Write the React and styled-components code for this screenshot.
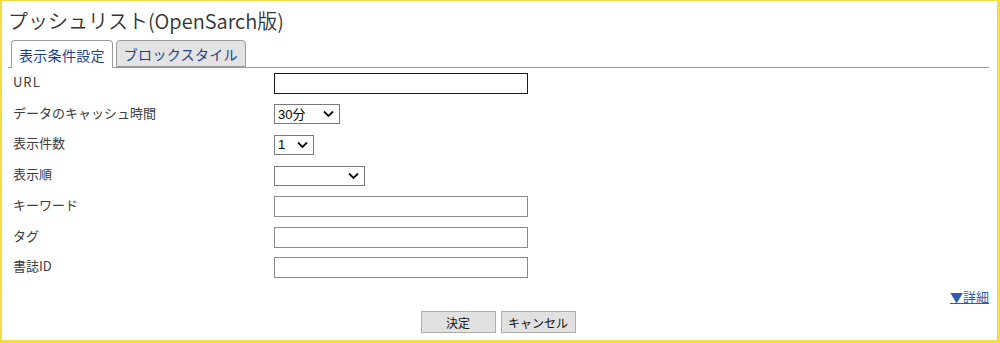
import React from 'react';
import styled, { createGlobalStyle } from 'styled-components';

const GlobalStyle = createGlobalStyle`
  html, body {
    margin: 0;
    padding: 0;
    background: #fff;
  }
  body {
    font-family: "Noto Sans CJK JP", "Noto Sans", sans-serif;
    color: #333;
  }
`

const Frame = styled.div`
  box-sizing: border-box;
  width: 1000px;
  height: 343px;
  border-style: solid;
  border-color: #f3dc45;
  border-width: 1px 3px 3px 2px;
  display: flex;
  flex-direction: column;
`

const Title = styled.h1`
  margin: 0;
  padding: 7px 0 0 6px;
  font-size: 20px;
  font-weight: 350;
  line-height: 26px;
  color: #333;
  height: 31px;
  box-sizing: border-box;
`

const TabBar = styled.div`
  display: flex;
  gap: 3px;
  margin: 8px 8px 0 6px;
  padding-left: 3px;
  border-bottom: 1px solid #999;
  height: 27px;
`

const Tab = styled.div`
  box-sizing: border-box;
  height: ${p => (p.active ? '28px' : '27px')};
  padding: 0 7px;
  display: flex;
  align-items: center;
  font-size: 14px;
  letter-spacing: 0.3px;
  color: #1d3f8c;
  background: ${p => (p.active ? '#fff' : '#e3e3e3')};
  border: 1px solid #9a9a9a;
  border-bottom: ${p => (p.active ? 'none' : '1px solid #9a9a9a')};
  border-radius: 4px 4px 0 0;
`

const Form = styled.div`
  display: grid;
  grid-template-columns: 261px 1fr;
  grid-auto-rows: 30.75px;
  padding-left: 11px;
  align-items: center;
`

const Label = styled.div`
  font-size: 13px;
  line-height: 18px;
  padding-bottom: 3px;
  color: #3c3c3c;
  letter-spacing: ${p => (p.latin ? '1px' : '0')};
`

const TextInput = styled.input`
  display: block;
  box-sizing: border-box;
  width: 254px;
  height: 21px;
  margin: 0;
  padding: 1px 3px;
  border: 1px solid ${p => (p.focused ? '#1a1a1a' : '#8a8a8a')};
  background: #fff;
  outline: none;
`

const SelectWrap = styled.div`
  position: relative;
  width: ${p => p.width}px;
  height: 20px;
`

const Select = styled.select`
  display: block;
  box-sizing: border-box;
  appearance: none;
  width: 100%;
  height: 20px;
  margin: 0;
  padding: 0 0 0 3px;
  border: 1px solid #7a7a7a;
  border-radius: 0;
  background: #fff;
  font-family: "Liberation Sans", "Noto Sans CJK JP", sans-serif;
  font-size: 13px;
  color: #000;
  outline: none;
`

const Chevron = styled.svg`
  position: absolute;
  right: 6px;
  top: 6px;
  pointer-events: none;
`

const MoreRow = styled.div`
  display: flex;
  justify-content: flex-end;
  padding: 4px 8px 0 0;
  height: 21px;
`

const MoreLink = styled.a`
  font-size: 13px;
  color: #2a5cb0;
  text-decoration: underline;
  cursor: pointer;
`

const Buttons = styled.div`
  display: flex;
  justify-content: center;
  gap: 5px;
  padding-top: 3px;
  padding-right: 3px;
`

const Button = styled.button`
  box-sizing: border-box;
  width: 75px;
  height: 22px;
  margin: 0;
  padding: 0;
  background: #e1e1e1;
  border: 1px solid #adadad;
  border-radius: 0;
  font-family: "Noto Sans CJK JP", sans-serif;
  font-size: 12px;
  color: #111;
`

const Arrow = () => (
  <Chevron width="11" height="8" viewBox="0 0 11 8">
    <path d="M1 1.5 L5.5 6 L10 1.5" fill="none" stroke="#111" strokeWidth="1.8" />
  </Chevron>
)

const DropDown = ({ width, options }) => (
  <SelectWrap width={width}>
    <Select defaultValue={options[0]}>
      {options.map(o => <option key={o}>{o}</option>)}
    </Select>
    <Arrow />
  </SelectWrap>
)

const App = () => (
  <>
    <GlobalStyle />
    <Frame>
      <Title>プッシュリスト(OpenSarch版)</Title>
      <TabBar>
        <Tab active>表示条件設定</Tab>
        <Tab>ブロックスタイル</Tab>
      </TabBar>
      <Form>
        <Label latin>URL</Label>
        <TextInput focused />
        <Label>データのキャッシュ時間</Label>
        <DropDown width={66} options={['30分', '1時間', '3時間']} />
        <Label>表示件数</Label>
        <DropDown width={40} options={['1', '5', '10']} />
        <Label>表示順</Label>
        <DropDown width={91} options={['']} />
        <Label>キーワード</Label>
        <TextInput />
        <Label>タグ</Label>
        <TextInput />
        <Label>書誌ID</Label>
        <TextInput />
      </Form>
      <MoreRow>
        <MoreLink>▼詳細</MoreLink>
      </MoreRow>
      <Buttons>
        <Button>決定</Button>
        <Button>キャンセル</Button>
      </Buttons>
    </Frame>
  </>
)

export default App;
